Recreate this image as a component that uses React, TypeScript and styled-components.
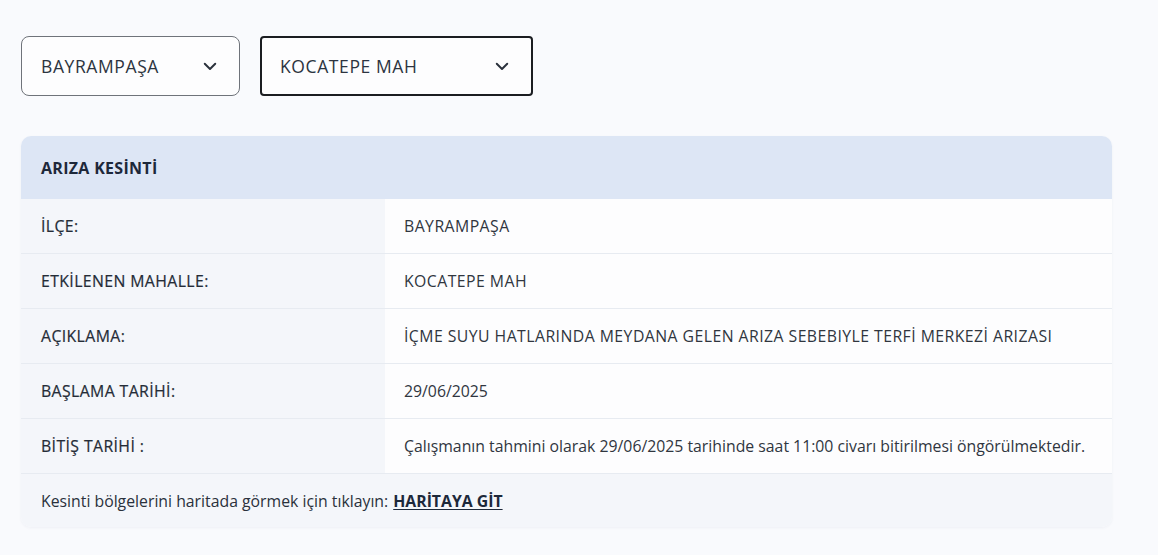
import React from "react";
import styled, { createGlobalStyle } from "styled-components";

const GlobalStyle = createGlobalStyle`
  html, body {
    margin: 0;
    padding: 0;
    background: #f9fafd;
    font-family: "Open Sans", "Noto Sans", sans-serif;
    color: #2a313c;
  }
`;

const Page = styled.div`
  padding: 36px 46px 30px 21px;
  display: flex;
  flex-direction: column;
  gap: 40px;
`;

const Filters = styled.div`
  display: flex;
  gap: 20px;
`;

const Select = styled.div<{ $w: number; $active?: boolean }>`
  box-sizing: border-box;
  width: ${(p) => p.$w}px;
  height: 60px;
  display: flex;
  align-items: center;
  justify-content: space-between;
  padding: 0 20px 0 ${(p) => (p.$active ? 18 : 19)}px;
  border: ${(p) => (p.$active ? "2px solid #1b1d21" : "1px solid #6f737a")};
  border-radius: ${(p) => (p.$active ? 4 : 8)}px;
  background: #fdfdfe;
  font-size: 17.5px;
  letter-spacing: 0.6px;
  color: #2c3440;
`;

const Card = styled.div`
  width: 1091px;
  border-radius: 10px;
  overflow: hidden;
  background: #fcfdfe;
  box-shadow: 0 1px 3px rgba(30, 50, 90, 0.05);
`;

const Header = styled.div`
  height: 63px;
  display: flex;
  align-items: center;
  padding-left: 20px;
  background: #dde6f5;
  font-size: 16px;
  font-weight: 700;
  letter-spacing: 0.3px;
  color: #1d283a;
`;

const Row = styled.div`
  display: grid;
  grid-template-columns: 364px 1fr;
  height: 54px;
  border-bottom: 1px solid #e7ebf1;
`;

const Label = styled.div`
  display: flex;
  align-items: center;
  padding-left: 20px;
  background: #f4f6fa;
  font-size: 15.8px;
  letter-spacing: 0.4px;
  -webkit-text-stroke: 0.2px #252c37;
  color: #252c37;
`;

const Value = styled.div<{ $caps?: boolean }>`
  display: flex;
  align-items: center;
  padding-left: 19px;
  background: #fdfdfe;
  font-size: 15.8px;
  letter-spacing: ${(p) => (p.$caps ? "0.45px" : "0")};
  color: #30363f;
`;

const Footer = styled.div`
  height: 53px;
  display: flex;
  align-items: center;
  padding-left: 20px;
  background: #f4f6fa;
  font-size: 15.8px;
  color: #2a313c;
  gap: 5px;
`;

const MapLink = styled.a`
  font-weight: 700;
  color: #1d283a;
  text-decoration: underline;
  text-underline-offset: 2px;
`;

const Chevron = () => (
  <svg width="18" height="18" viewBox="0 0 24 24" fill="none" stroke="#2a313c" strokeWidth="2.6" strokeLinecap="round" strokeLinejoin="round">
    <path d="M5 9l7 7 7-7" />
  </svg>
);

const rows: [string, string, boolean][] = [
  ["İLÇE:", "BAYRAMPAŞA", true],
  ["ETKİLENEN MAHALLE:", "KOCATEPE MAH", true],
  ["AÇIKLAMA:", "İÇME SUYU HATLARINDA MEYDANA GELEN ARIZA SEBEBIYLE TERFİ MERKEZİ ARIZASI", true],
  ["BAŞLAMA TARİHİ:", "29/06/2025", false],
  ["BİTİŞ TARİHİ :", "Çalışmanın tahmini olarak 29/06/2025 tarihinde saat 11:00 civarı bitirilmesi öngörülmektedir.", false],
];

export default function App() {
  return (
    <>
      <GlobalStyle />
      <Page>
        <Filters>
          <Select $w={219}>
            BAYRAMPAŞA
            <Chevron />
          </Select>
          <Select $w={273} $active>
            KOCATEPE MAH
            <Chevron />
          </Select>
        </Filters>
        <Card>
          <Header>ARIZA KESİNTİ</Header>
          {rows.map(([k, v, caps]) => (
            <Row key={k}>
              <Label>{k}</Label>
              <Value $caps={caps}>{v}</Value>
            </Row>
          ))}
          <Footer>
            Kesinti bölgelerini haritada görmek için tıklayın:
            <MapLink href="#">HARİTAYA GİT</MapLink>
          </Footer>
        </Card>
      </Page>
    </>
  );
}
